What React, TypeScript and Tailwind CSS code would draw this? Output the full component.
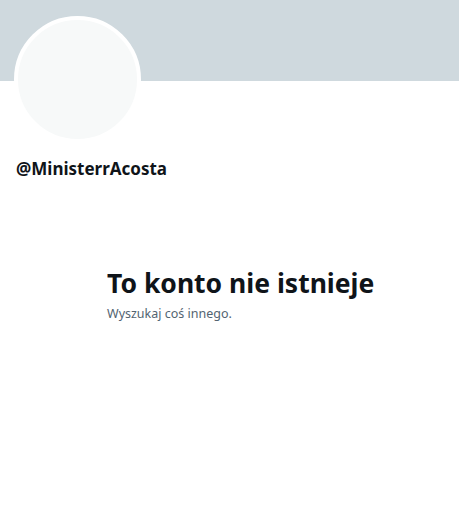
export default function App() {
  return (
    <div className="w-[459px] h-[517px] bg-white overflow-hidden font-['Noto_Sans',sans-serif] text-[#0f1419]">
      <div className="h-[81px] bg-[#cfd9de]" />
      <div className="px-[14px] -mt-[65px]">
        <div className="w-[127px] h-[127px] rounded-full border-4 border-white bg-[#f7f9f9]" />
      </div>
      <div className="px-4 mt-[15px]">
        <h2 className="text-[17px] font-bold leading-[22px]">@MinisterrAcosta</h2>
      </div>
      <div className="ml-[107px] mt-[88px]">
        <h1 className="text-[26.5px] font-bold leading-[31px]">To konto nie istnieje</h1>
        <p className="text-[12.5px] leading-[17px] text-[#536471] mt-[6px]">Wyszukaj coś innego.</p>
      </div>
    </div>
  );
}
